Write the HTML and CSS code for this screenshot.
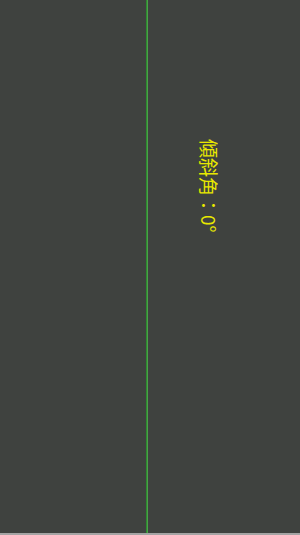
FILE: index.html
```html
<!DOCTYPE html>
<html lang="ja">
<head>
<meta charset="utf-8">
<link rel="stylesheet" href="styles.css">
</head>
<body>
<div class="screen">
  <div class="main">
    <div class="left"></div>
    <div class="divider"></div>
    <div class="right">
      <div class="label">傾斜角：0°</div>
    </div>
  </div>
  <div class="bottom"></div>
</div>
</body>
</html>
```
FILE: styles.css
```css
html, body {
  margin: 0;
  padding: 0;
  background: #3f423f;
}
.screen {
  width: 300px;
  height: 535px;
  display: flex;
  flex-direction: column;
  overflow: hidden;
}
.main {
  flex: 1;
  display: flex;
}
.left {
  width: 146px;
}
.divider {
  width: 2px;
  background: linear-gradient(to right, #2e8a2e 0 50%, #4aa04a 50% 100%);
}
.right {
  flex: 1;
  padding-left: 50px;
  padding-top: 139px;
}
.label {
  writing-mode: vertical-rl;
  text-orientation: sideways;
  font-family: "Noto Sans CJK JP", "Noto Sans", sans-serif;
  font-size: 19px;
  line-height: 22px;
  color: #e8e800;
}
.bottom {
  height: 2px;
  background: #a4a4a4;
}
```
